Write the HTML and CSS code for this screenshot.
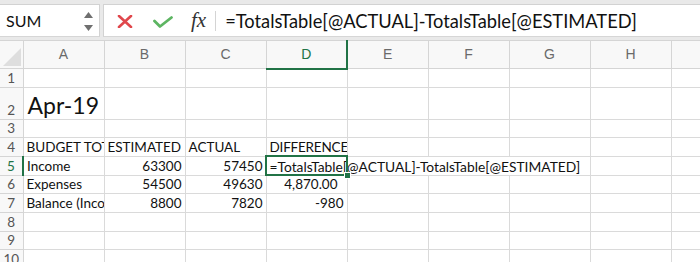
FILE: index.html
```html
<!DOCTYPE html>
<html lang="en">

<head>
    <meta charset="UTF-8">
    <meta name="viewport" content="width=device-width, initial-scale=1.0">
    <title>Budget</title>
    <link rel="stylesheet" href="styles.css">
</head>

<body>

    <div class="topbar">
        <div class="namebox">
            <span class="name">SUM</span>
            <svg class="stepper" width="9" height="20" viewBox="0 0 9 20">
                <path d="M4.5 0 L9 6 L0 6 Z" fill="#6f6f6f" />
                <path d="M0 13 L9 13 L4.5 19 Z" fill="#6f6f6f" />
            </svg>
        </div>
        <div class="formula">
            <svg class="icon cancel" width="16" height="13" viewBox="0 0 16 13">
                <path d="M2 1 L14 12 M14 1 L2 12" stroke="#e0474c" stroke-width="2.6" stroke-linecap="round" />
            </svg>
            <svg class="icon enter" width="20" height="12" viewBox="0 0 20 12">
                <path d="M1.5 5 L7 10.5 L18.5 1.5" stroke="#5db562" stroke-width="2.8" fill="none" stroke-linecap="round" stroke-linejoin="round" />
            </svg>
            <span class="fx">fx</span>
            <span class="sep"></span>
            <span class="ftext">=TotalsTable[@ACTUAL]-TotalsTable[@ESTIMATED]</span>
        </div>
    </div>

    <table class="sheet">
        <colgroup>
            <col class="rh">
            <col span="9" class="col">
        </colgroup>
        <tr class="head">
            <th class="corner"><span class="tri"></span></th>
            <th>A</th><th>B</th><th>C</th><th class="active">D</th><th>E</th><th>F</th><th>G</th><th>H</th><th></th>
        </tr>
        <tr>
            <th>1</th><td></td><td></td><td></td><td></td><td></td><td></td><td></td><td></td><td></td>
        </tr>
        <tr class="tall">
            <th>2</th><td class="month">Apr-19</td><td></td><td></td><td></td><td></td><td></td><td></td><td></td><td></td>
        </tr>
        <tr>
            <th>3</th><td></td><td></td><td></td><td></td><td></td><td></td><td></td><td></td><td></td>
        </tr>
        <tr>
            <th>4</th><td>BUDGET TOTALS</td><td>ESTIMATED</td><td>ACTUAL</td><td class="tight">DIFFERENCE</td><td></td><td></td><td></td><td></td><td></td>
        </tr>
        <tr>
            <th class="active">5</th><td>Income</td><td class="num">63300</td><td class="num">57450</td>
            <td class="editing" colspan="4"><div class="selbox"><span class="handle"></span></div>=TotalsTable[@ACTUAL]-TotalsTable[@ESTIMATED]</td>
            <td></td><td></td>
        </tr>
        <tr>
            <th>6</th><td>Expenses</td><td class="num">54500</td><td class="num">49630</td><td class="num pad">4,870.00</td><td></td><td></td><td></td><td></td><td></td>
        </tr>
        <tr>
            <th>7</th><td>Balance (Income - Expenses)</td><td class="num">8800</td><td class="num">7820</td><td class="num">-980</td><td></td><td></td><td></td><td></td><td></td>
        </tr>
        <tr>
            <th>8</th><td></td><td></td><td></td><td></td><td></td><td></td><td></td><td></td><td></td>
        </tr>
        <tr>
            <th>9</th><td></td><td></td><td></td><td></td><td></td><td></td><td></td><td></td><td></td>
        </tr>
        <tr>
            <th>10</th><td></td><td></td><td></td><td></td><td></td><td></td><td></td><td></td><td></td>
        </tr>
    </table>

</body>

</html>
```

FILE: styles.css
```css
body {
    margin: 0;
    width: 700px;
    height: 262px;
    overflow: hidden;
    background-color: #fff;
    font-family: Lato, "Open Sans", sans-serif;
    color: #111;
}

/* toolbar with name box and formula bar */
.topbar {
    display: flex;
    gap: 3px;
    padding: 4px 0 3px;
    background-color: #e9e9e9;
}

.namebox,
.formula {
    display: flex;
    align-items: center;
    height: 33px;
    box-sizing: border-box;
    background-color: #fff;
    border-top: 1px solid #d2d2d2;
    border-bottom: 1px solid #d6d6d6;
}

.namebox {
    width: 100px;
    border-right: 1px solid #d2d2d2;
}

.name {
    margin-left: 6px;
    font-size: 16px;
    flex: 1;
}

.stepper {
    margin-right: 6px;
    margin-top: 2px;
}

.formula {
    flex: 1;
    border-left: 1px solid #d2d2d2;
}

.icon {
    display: block;
}

.cancel {
    margin-left: 13px;
    margin-top: 2px;
}

.enter {
    margin-left: 20px;
    margin-top: 2px;
}

.fx {
    margin-left: 18px;
    font-family: "Liberation Serif", serif;
    font-style: italic;
    font-size: 21px;
    color: #333;
}

.sep {
    width: 1px;
    height: 20px;
    margin-left: 9px;
    background-color: #d4d4d4;
}

.ftext {
    margin-left: 9px;
    font-size: 18.3px;
    white-space: nowrap;
}

/* grid */
.sheet {
    border-collapse: collapse;
    table-layout: fixed;
    width: 752px;
}

.rh {
    width: 23px;
}

.col {
    width: 81px;
}

.sheet tr {
    height: 18.67px;
}

.sheet tr.head {
    height: 28px;
}

.sheet tr.tall {
    height: 32px;
}

.sheet td,
.sheet th {
    padding: 0 3px;
    border: 1px solid #dadada;
    overflow: hidden;
    white-space: nowrap;
    vertical-align: bottom;
    font-size: 13.5px;
    line-height: 17px;
    text-align: left;
}

.sheet th {
    padding: 0;
    background-color: #f8f8f8;
    border-color: #d5d5d5;
    font-weight: 400;
    color: #555;
    text-align: center;
}

.sheet tr > :first-child {
    border-left: none;
}

.sheet .head th {
    vertical-align: middle;
    font-family: "Liberation Sans", sans-serif;
    font-size: 14px;
    color: #6a6a6a;
}

.sheet .head th.active {
    color: #217346;
    border-bottom: 2px solid #217346;
}

.sheet th.active {
    color: #217346;
    border-right: 2px solid #217346;
}

.sheet .corner {
    position: relative;
}

.tri {
    position: absolute;
    right: 2px;
    bottom: 2px;
    width: 0;
    height: 0;
    border-left: 18px solid transparent;
    border-bottom: 18px solid #dedede;
}

.sheet td.month {
    padding-left: 4px;
    font-size: 23px;
    line-height: 28px;
}

.sheet td.tight {
    letter-spacing: -0.2px;
}

.sheet td.num {
    text-align: right;
}

.sheet td.pad {
    padding-right: 9px;
}

.sheet td.editing {
    position: relative;
    overflow: visible;
    font-size: 13.8px;
}

.selbox {
    position: absolute;
    left: -2px;
    top: -2px;
    width: 79px;
    height: 17px;
    border: 2px solid #217346;
}

.handle {
    position: absolute;
    right: -5px;
    bottom: -5px;
    width: 5px;
    height: 5px;
    background-color: #217346;
    border: 1px solid #fff;
}
```
